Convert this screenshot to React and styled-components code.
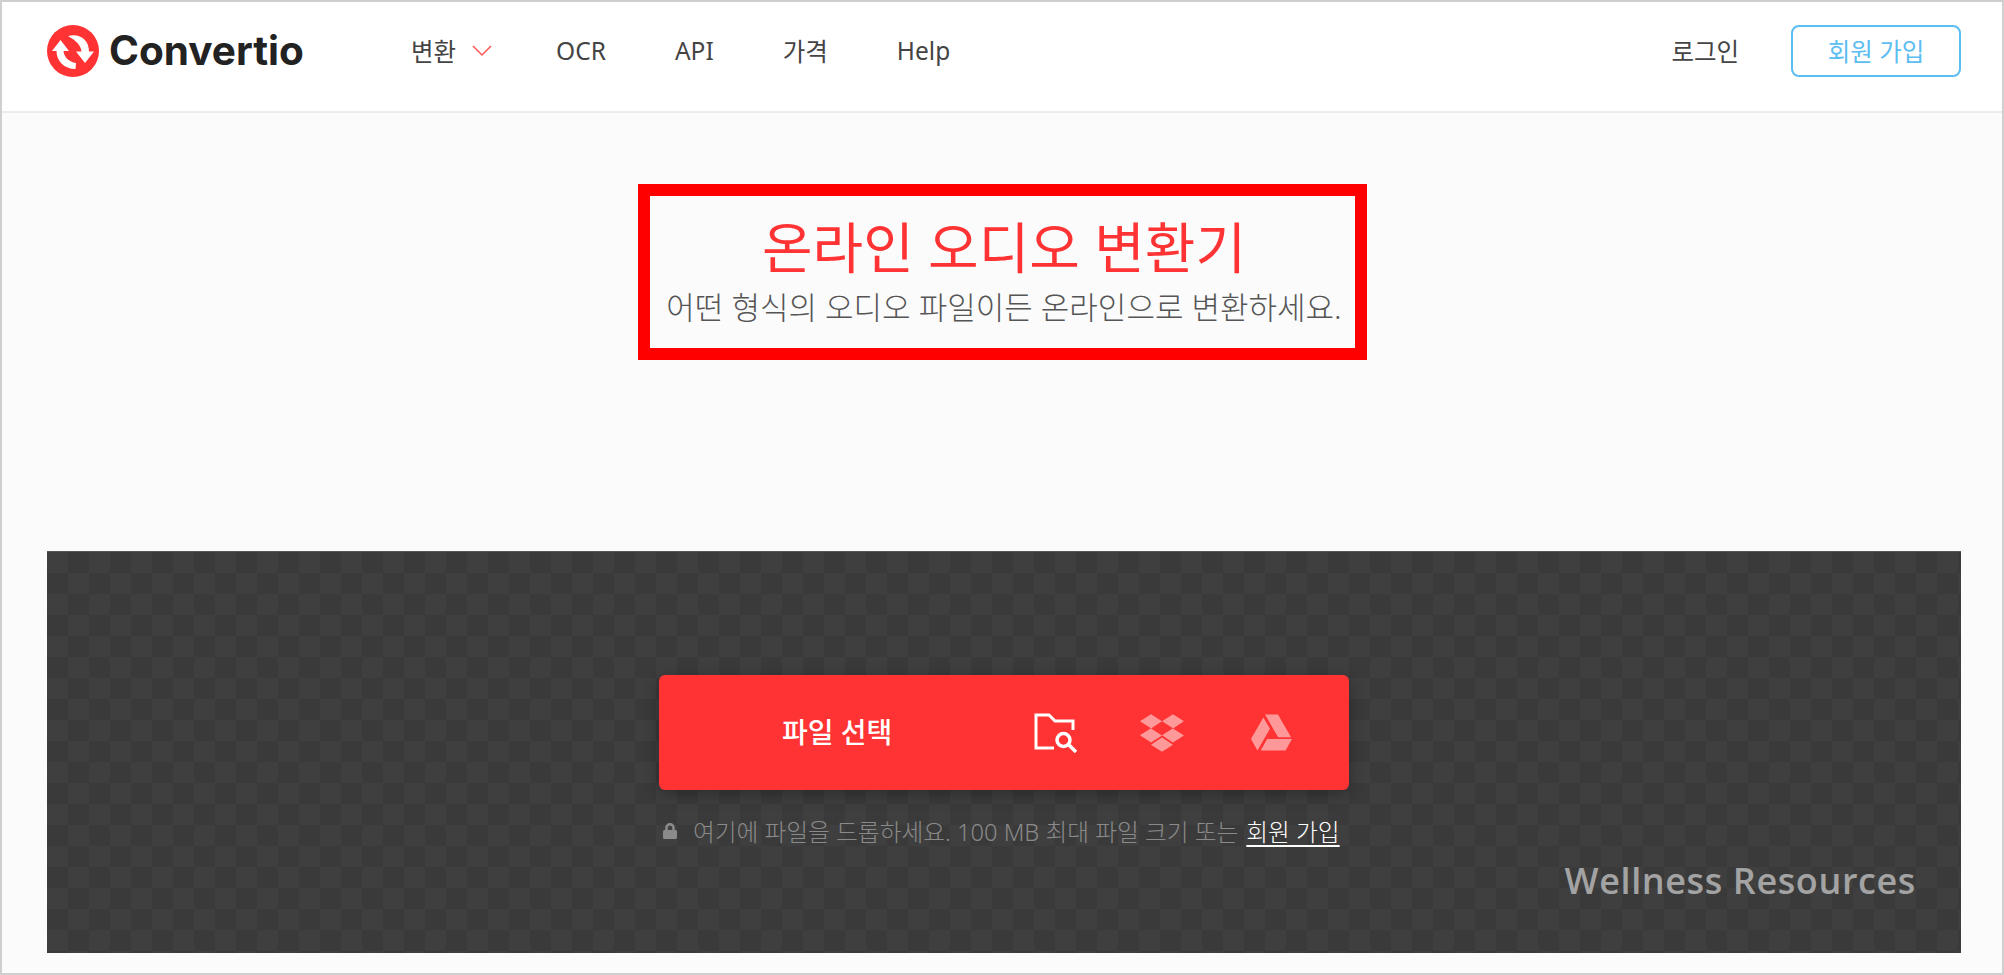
import styled, { createGlobalStyle } from 'styled-components';
import { FaDropbox, FaGoogleDrive, FaLock } from 'react-icons/fa';

const GlobalStyle = createGlobalStyle`
  html, body {
    margin: 0;
    padding: 0;
    background: #fbfbfb;
  }
  * {
    box-sizing: border-box;
  }
`;

const kr = `"Noto Sans", "Noto Sans CJK KR", sans-serif`;

const Page = styled.div`
  width: 2004px;
  height: 975px;
  border: 2px solid #cfcfcf;
  background: #fbfbfb;
  font-family: ${kr};
  overflow: hidden;
`;

const Header = styled.header`
  height: 111px;
  display: flex;
  align-items: center;
  background: #fff;
  border-bottom: 2px solid #ececec;
  padding: 0 41px 12px 45px;
`;

const Logo = styled.a`
  display: flex;
  align-items: center;
  gap: 10px;
  width: 364px;
`;

const LogoText = styled.span`
  font-family: Inter, sans-serif;
  font-size: 40.5px;
  font-weight: 700;
  color: #222;
`;

const Nav = styled.nav`
  display: flex;
  align-items: center;
  gap: 69px;
  flex: 1;
`;

const NavItem = styled.a`
  display: flex;
  align-items: center;
  gap: 16px;
  font-size: 24.5px;
  color: #444;
`;

const Chevron = styled.svg`
  margin-right: -5px;
`;

const SignIn = styled.a`
  font-size: 24.5px;
  color: #444;
  margin-right: 52px;
`;

const SignUp = styled.a`
  width: 170px;
  height: 52px;
  display: flex;
  align-items: center;
  justify-content: center;
  border: 2px solid #5cbdf0;
  border-radius: 8px;
  font-size: 24.5px;
  color: #5cbdf0;
`;

const Intro = styled.div`
  display: flex;
  justify-content: center;
  padding-top: 71px;
  height: 438px;
`;

const TitleBox = styled.div`
  width: 729px;
  height: 176px;
  border: 12px solid #ff0000;
  padding-left: 4px;
  text-align: center;
`;

const Title = styled.h1`
  margin: 15px 0 0;
  font-size: 55px;
  line-height: 72px;
  font-weight: 400;
  color: #ff3333;
`;

const Subtitle = styled.p`
  margin: 2px 0 0;
  font-size: 31px;
  line-height: 44px;
  font-weight: 300;
  color: #555;
`;

const DropArea = styled.section`
  position: relative;
  height: 402px;
  margin: 0 41px 0 45px;
  padding-top: 123px;
  display: flex;
  flex-direction: column;
  align-items: center;
  background-color: #3c3c3c;
  background-image: conic-gradient(#3a3a3a 25%, #3f3f3f 0 50%, #3a3a3a 0 75%, #3f3f3f 0);
  background-size: 42px 42px;
  border-top: 1px solid #555;
`;

const PickButton = styled.div`
  width: 690px;
  height: 115px;
  display: flex;
  align-items: center;
  background: #ff3333;
  border-radius: 6px;
  box-shadow: 0 4px 16px rgba(0, 0, 0, 0.3);
  color: #fff;
`;

const PickLabel = styled.span`
  width: 375px;
  padding: 0 0 4px 123px;
  font-size: 28px;
  font-weight: 500;
`;

const Source = styled.span`
  width: ${(p) => p.$w}px;
  display: flex;
  justify-content: center;
  opacity: ${(p) => (p.$dim ? 0.5 : 1)};
  font-size: ${(p) => p.$size || 44}px;
  line-height: 0;
`;

const Note = styled.p`
  margin: 24px 0 0;
  width: 690px;
  display: flex;
  align-items: center;
  padding-left: 3px;
  font-size: 23.7px;
  font-weight: 300;
  white-space: nowrap;
  color: #8a8a8a;
`;

const LockIcon = styled(FaLock)`
  font-size: 16px;
  margin-right: 15px;
`;

const SignUpLink = styled.a`
  margin-left: 8px;
  color: #fff;
  text-decoration: underline;
  text-underline-offset: 4px;
`;

const Watermark = styled.span`
  position: absolute;
  right: 45px;
  bottom: 48px;
  font-family: "Open Sans", sans-serif;
  font-size: 36px;
  font-weight: 600;
  letter-spacing: 0.6px;
  color: #a3a3a3;
`;

function LogoMark() {
  return (
    <svg width="52" height="52" viewBox="0 0 52 52">
      <circle cx="26" cy="26" r="26" fill="#ff3333" />
      <path d="M5 26 L13.5 15 L22 26 H16.5 C17 32 22 37 29 38 L28.5 44 C17 44 9.5 36 9.5 26 Z" fill="#fff" />
      <path d="M47 26.5 L38 38 L29 26.5 H34.5 C34 21 30 16 21 11 C33 8 42 15 42 26.5 Z" fill="#fff" />
    </svg>
  );
}

function FolderSearch() {
  return (
    <svg width="44" height="40" viewBox="0 0 44 40" fill="none" stroke="#fff" strokeWidth="3">
      <path d="M20 35 H2 V2 H15 L21 8 H39 V17" />
      <circle cx="29.5" cy="27" r="6.5" strokeWidth="3.5" />
      <path d="M35 32 L42 39" strokeWidth="3.5" />
    </svg>
  );
}

export default function App() {
  return (
    <Page>
      <GlobalStyle />
      <Header>
        <Logo>
          <LogoMark />
          <LogoText>Convertio</LogoText>
        </Logo>
        <Nav>
          <NavItem>
            변환
            <Chevron width="20" height="12" viewBox="0 0 20 12">
              <path d="M1 1 L10 10 L19 1" fill="none" stroke="#ff5555" strokeWidth="1.5" />
            </Chevron>
          </NavItem>
          <NavItem>OCR</NavItem>
          <NavItem>API</NavItem>
          <NavItem>가격</NavItem>
          <NavItem>Help</NavItem>
        </Nav>
        <SignIn>로그인</SignIn>
        <SignUp>회원 가입</SignUp>
      </Header>
      <Intro>
        <TitleBox>
          <Title>온라인 오디오 변환기</Title>
          <Subtitle>어떤 형식의 오디오 파일이든 온라인으로 변환하세요.</Subtitle>
        </TitleBox>
      </Intro>
      <DropArea>
        <PickButton>
          <PickLabel>파일 선택</PickLabel>
          <Source $w={44}>
            <FolderSearch />
          </Source>
          <Source $w={168} $dim>
            <FaDropbox />
          </Source>
          <Source $w={50} $size={41} $dim>
            <FaGoogleDrive />
          </Source>
        </PickButton>
        <Note>
          <LockIcon />
          여기에 파일을 드롭하세요. 100 MB 최대 파일 크기 또는
          <SignUpLink>회원 가입</SignUpLink>
        </Note>
        <Watermark>Wellness Resources</Watermark>
      </DropArea>
    </Page>
  );
}
